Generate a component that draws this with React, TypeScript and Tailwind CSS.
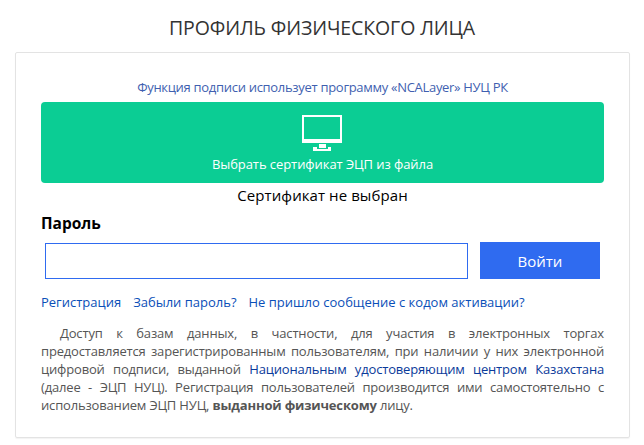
export default function App() {
  return (
    <div className="w-[644px] h-[445px] bg-white overflow-hidden font-['Open_Sans','Liberation_Sans',sans-serif]">
      <h1 className="h-[52px] pt-[16px] text-center text-[19.5px] leading-[24px] text-[#333] tracking-[-0.1px]">ПРОФИЛЬ ФИЗИЧЕСКОГО ЛИЦА</h1>
      <div className="ml-[15px] mr-[14px] h-[386px] border border-[#e3e3e3] rounded-[2px] shadow-[0_1px_1px_rgba(0,0,0,0.05)] px-[25px] pt-[24px]">
        <p className="text-center text-[13px] leading-[20px] text-[#3f5fb0] tracking-[-0.3px]">Функция подписи использует программу «NCALayer» НУЦ РК</p>
        <button className="mt-[5px] w-full h-[81px] rounded-[4px] bg-[#0bcd94] text-white flex flex-col items-center">
          <svg className="mt-[13px] -ml-[1px] block" width="40" height="36" viewBox="0 0 40 36" fill="none">
            <path d="M0 0H40V28H0Z M2 2V24H38V2Z" fill="#fff" fillRule="evenodd" />
            <path d="M17 29H24V33H17Z" fill="#fff" />
            <path d="M11 32H15V34H26V32H29V36H11Z" fill="#fff" />
          </svg>
          <span className="mt-[3px] text-[13px] leading-[20px] tracking-[-0.07px]">Выбрать сертификат ЭЦП из файла</span>
        </button>
        <p className="text-center text-[15px] leading-[25px] text-black tracking-[0.08px]">Сертификат не выбран</p>
        <label className="block mt-[3px] text-[15.5px] leading-[24px] font-bold text-black">Пароль</label>
        <div className="mt-[7px] flex items-end">
          <input type="password" className="ml-[4px] w-[423px] h-[36px] border border-[#2f6bf0] outline-none bg-white" />
          <button className="ml-[12px] w-[120px] h-[37px] pt-[2px] bg-[#2f6bf0] text-white text-[15px]">Войти</button>
        </div>
        <div className="mt-[13px] flex gap-[12px] text-[13px] leading-[20px] text-[#0a4fb8]">
          <a>Регистрация</a><a>Забыли пароль?</a><a>Не пришло сообщение с кодом активации?</a>
        </div>
        <p className="mt-[12px] text-justify text-[13px] leading-[18px] text-[#555] indent-[19px] tracking-[-0.17px]">
          Доступ к базам данных, в частности, для участия в электронных торгах предоставляется зарегистрированным пользователям, при наличии у них электронной цифровой подписи, выданной <a className="text-[#0a3a9a]">Национальным удостоверяющим центром Казахстана</a> (далее - ЭЦП НУЦ). Регистрация пользователей производится ими самостоятельно с использованием ЭЦП НУЦ, <b>выданной физическому</b> лицу.
        </p>
      </div>
    </div>
  );
}
